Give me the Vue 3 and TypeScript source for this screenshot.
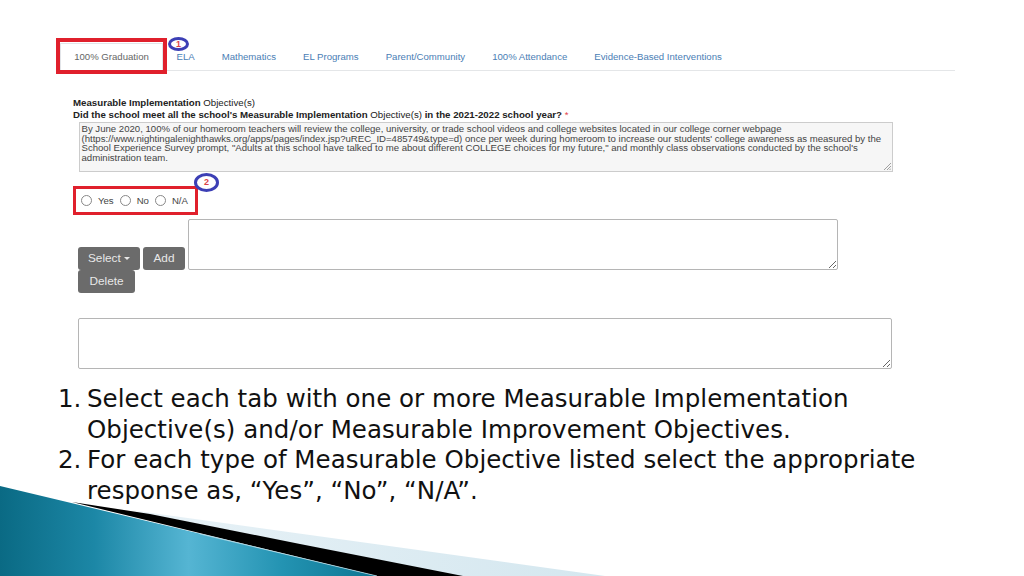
<script setup lang="ts">
const tabs: string[] = ['100% Graduation', 'ELA', 'Mathematics', 'EL Programs', 'Parent/Community', '100% Attendance', 'Evidence-Based Interventions']
const lines: string[] = [
  'By June 2020, 100% of our homeroom teachers will review the college, university, or trade school videos and college websites located in our college corner webpage',
  "(https://www.nightingalenighthawks.org/apps/pages/index.jsp?uREC_ID=485749&type=d) once per week during homeroom to increase our students' college awareness as measured by the",
  'School Experience Survey prompt, "Adults at this school have talked to me about different COLLEGE choices for my future," and monthly class observations conducted by the school\'s',
  'administration team.',
]
const radios: string[] = ['Yes', 'No', 'N/A']
const steps: { text: string; cont: string }[] = [
  { text: 'Select each tab with one or more Measurable Implementation', cont: 'Objective(s) and/or Measurable Improvement Objectives.' },
  { text: 'For each type of Measurable Objective listed select the appropriate', cont: 'response as, “Yes”, “No”, “N/A”.' },
]
</script>

<template>
  <div class="slide">
    <svg class="swoosh" viewBox="0 0 1024 576" preserveAspectRatio="none" aria-hidden="true">
      <defs>
        <linearGradient id="teal" gradientUnits="userSpaceOnUse" x1="0" y1="540" x2="377" y2="540">
          <stop offset="0" stop-color="#0a6a84" />
          <stop offset="0.25" stop-color="#1c87a6" />
          <stop offset="0.5" stop-color="#55b5d3" />
          <stop offset="0.75" stop-color="#2393b2" />
          <stop offset="1" stop-color="#0c7591" />
        </linearGradient>
        <linearGradient id="pale" gradientUnits="userSpaceOnUse" x1="130" y1="540" x2="605" y2="540">
          <stop offset="0" stop-color="#e8f2f7" />
          <stop offset="1" stop-color="#d4e7ef" />
        </linearGradient>
      </defs>
      <polygon points="130,510 605,576 450,576" fill="url(#pale)" />
      <polygon points="72,502 150,514 300,544 463,576 377,576" fill="#000" />
      <polygon points="0,486 377,576 0,576" fill="url(#teal)" />
      <line x1="200" y1="534" x2="377" y2="576" stroke="#bfe3ee" stroke-width=".7" />
    </svg>

    <nav class="tabs">
      <a v-for="(t, i) in tabs" :key="t" class="tab" :class="{ active: i === 0 }">{{ t }}</a>
      <span class="red-frame"></span>
      <span class="badge badge-1">1</span>
    </nav>

    <section class="form">
      <p class="label"><b>Measurable Implementation</b> Objective(s)</p>
      <p class="label"><b>Did the school meet all the school's Measurable Implementation</b> Objective(s) <b>in the 2021-2022 school year?</b> <i class="req">*</i></p>

      <div class="objective">
        <span v-for="l in lines" :key="l" class="line">{{ l }}</span>
        <svg class="grip" viewBox="0 0 8 8" aria-hidden="true"><path d="M1 8 8 1M4 8 8 4M6.5 8 8 6.5" stroke="#8b8b8b" stroke-width=".8" fill="none" /></svg>
      </div>

      <div class="radio-row">
        <span class="radio-box">
          <label v-for="r in radios" :key="r" class="radio"><i class="dot"></i>{{ r }}</label>
        </span>
        <span class="badge badge-2">2</span>
      </div>

      <div class="action-row">
        <div class="buttons">
          <button class="btn btn-select">Select <i class="caret"></i></button>
          <button class="btn btn-add">Add</button>
          <button class="btn btn-delete">Delete</button>
        </div>
        <textarea class="box box-a"></textarea>
      </div>

      <textarea class="box box-b"></textarea>
    </section>

    <ol class="steps">
      <li v-for="(s, i) in steps" :key="i">
        <span class="num">{{ i + 1 }}.</span>
        <span class="step-text">{{ s.text }}<br />{{ s.cont }}</span>
      </li>
    </ol>
  </div>
</template>

<style scoped>
.slide {
  position: relative;
  width: 1024px;
  height: 576px;
  overflow: hidden;
  background: #fff;
  padding: 40px 0 0 58px;
  box-sizing: border-box;
  font-family: "Liberation Sans", Arial, sans-serif;
}
.swoosh {
  position: absolute;
  inset: 0;
  width: 1024px;
  height: 576px;
}
.tabs {
  position: relative;
  display: flex;
  align-items: flex-end;
  width: 897px;
  height: 31px;
  padding-left: 2px;
  box-sizing: border-box;
  border-bottom: 1px solid #e4e6e8;
}
.tab {
  height: 27px;
  padding: 8px 13.5px 0;
  box-sizing: border-box;
  font-size: 9.6px;
  line-height: 11px;
  color: #4a7eb5;
  white-space: nowrap;
}
.tab.active {
  width: 103px;
  padding: 7px 0 0;
  text-align: center;
  color: #666;
  background: #fff;
  border: 1px solid #e2e4e8;
  border-bottom: 0;
}
.red-frame {
  position: absolute;
  left: -2px;
  top: -2px;
  width: 111px;
  height: 36px;
  box-sizing: border-box;
  border: 4px solid #e0202c;
}
.badge {
  position: absolute;
  display: flex;
  align-items: center;
  justify-content: center;
  box-sizing: border-box;
  border: 3px solid #3c3fb5;
  border-radius: 50%;
  background: #fff;
  color: #dc3f48;
  font-size: 9px;
  font-weight: 700;
  line-height: 1;
}
.badge-1 {
  left: 110px;
  top: -3px;
  width: 21px;
  height: 14px;
}
.badge-2 {
  left: 121px;
  top: -13px;
  width: 25px;
  height: 19px;
}
.form {
  position: relative;
  width: 820px;
  margin: 26px 0 0 15px;
}
.label {
  margin: 0;
  font-size: 9.7px;
  line-height: 12px;
  color: #222;
  white-space: nowrap;
}
.req {
  color: #e2454c;
  font-style: normal;
}
.objective {
  position: relative;
  width: 814px;
  height: 50px;
  margin: 1px 0 0 6px;
  padding: 1px 1.5px;
  box-sizing: border-box;
  background: #f6f6f6;
  border: 1px solid #ccc;
  font-size: 9.6px;
  line-height: 9.6px;
  color: #444;
}
.line {
  display: block;
  white-space: nowrap;
}
.grip {
  position: absolute;
  right: 1px;
  bottom: 1px;
  width: 8px;
  height: 8px;
}
.radio-row {
  position: relative;
  height: 33px;
  margin-top: 14px;
}
.radio-box {
  display: inline-flex;
  align-items: center;
  box-sizing: border-box;
  width: 125px;
  height: 29px;
  border: 3.5px solid #e0202c;
  padding-left: 5px;
  gap: 6px;
}
.radio {
  display: inline-flex;
  align-items: center;
  gap: 6px;
  font-size: 9.6px;
  color: #444;
}
.dot {
  width: 11px;
  height: 11px;
  box-sizing: border-box;
  border: 1px solid #888;
  border-radius: 50%;
  background: #fff;
}
.action-row {
  display: flex;
  align-items: flex-start;
  margin-left: 5px;
}
.buttons {
  display: flex;
  flex-wrap: wrap;
  align-content: flex-start;
  width: 110px;
  gap: 0 3px;
  margin-top: 28px;
}
.btn {
  height: 23px;
  padding: 0 0 2px;
  border: 0;
  border-radius: 3px;
  background: #6b6b6b;
  color: #e8e8e8;
  font: 11.8px "Liberation Sans", Arial, sans-serif;
  white-space: nowrap;
}
.btn-select { width: 62px; }
.btn-add { width: 42px; }
.btn-delete { width: 57px; }
.caret {
  display: inline-block;
  border-top: 3px solid #e8e8e8;
  border-left: 3px solid transparent;
  border-right: 3px solid transparent;
  vertical-align: middle;
}
.box {
  display: block;
  box-sizing: border-box;
  border: 1px solid #b5b5b5;
  border-radius: 2px;
  background: #fff;
  resize: vertical;
  margin: 0;
}
.box-a {
  width: 650px;
  height: 51px;
}
.box-b {
  width: 814px;
  height: 51px;
  margin: 25px 0 0 5px;
}
.steps {
  position: relative;
  list-style: none;
  margin: 15px 0 0 0;
  padding: 0;
  font-family: "DejaVu Sans", sans-serif;
  font-size: 24.5px;
  line-height: 30.6px;
  letter-spacing: .03px;
  color: #111;
}
.steps li {
  display: flex;
}
.num {
  width: 29px;
  flex: none;
}
.step-text {
  white-space: nowrap;
}
</style>

<style>
html, body { margin: 0; background: #fff; }
</style>
